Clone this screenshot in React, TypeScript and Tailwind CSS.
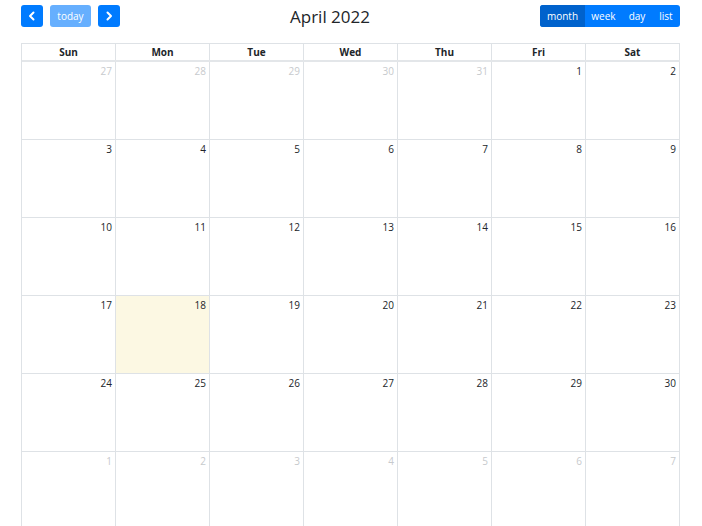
import React from 'react';

type Day = { n: number; muted?: boolean; today?: boolean };

const weekdays = ['Sun', 'Mon', 'Tue', 'Wed', 'Thu', 'Fri', 'Sat'];

// April 2022 laid out as six weeks, padding with March / May days
const buildWeeks = (): Day[][] => {
  const days: Day[] = [];
  for (let d = 27; d <= 31; d++) days.push({ n: d, muted: true });
  for (let d = 1; d <= 30; d++) days.push({ n: d, today: d === 18 });
  let next = 1;
  while (days.length < 42) days.push({ n: next++, muted: true });
  const weeks: Day[][] = [];
  for (let i = 0; i < 42; i += 7) weeks.push(days.slice(i, i + 7));
  return weeks;
};

const Chevron: React.FC<{ dir: 'left' | 'right' }> = ({ dir }) => (
  <svg width="10" height="10" viewBox="0 0 10 10" fill="none">
    <path
      d={dir === 'left' ? 'M6.5 1.5 3 5l3.5 3.5' : 'M3.5 1.5 7 5 3.5 8.5'}
      stroke="white"
      strokeWidth="2"
      strokeLinecap="round"
      strokeLinejoin="round"
    />
  </svg>
);

export default function App() {
  const weeks = buildWeeks();

  return (
    <div
      className="w-[702px] h-[526px] overflow-hidden bg-white pl-[21px] pr-[22px] pt-[5px]"
      style={{ fontFamily: '"Open Sans", "Noto Sans", sans-serif' }}
    >
      {/* toolbar */}
      <div className="flex items-center justify-between h-[22px]">
        <div className="flex items-center">
          <button className="w-[22px] h-[22px] rounded-[3px] bg-[#007bff] flex items-center justify-center">
            <Chevron dir="left" />
          </button>
          <button className="ml-[7px] w-[41px] h-[22px] rounded-[3px] bg-[#66affe] text-white text-[10px] leading-none">
            today
          </button>
          <button className="ml-[7px] w-[22px] h-[22px] rounded-[3px] bg-[#007bff] flex items-center justify-center">
            <Chevron dir="right" />
          </button>
        </div>
        <h2 className="text-[17px] leading-none text-[#212529]">April 2022</h2>
        <div className="flex h-[22px] w-[140px] rounded-[3px] overflow-hidden bg-[#007bff] text-white text-[10px]">
          <button className="w-[45px] bg-[#0062cc]">month</button>
          <button className="w-[37px]">week</button>
          <button className="w-[30px]">day</button>
          <button className="w-[28px]">list</button>
        </div>
      </div>

      {/* month grid */}
      <div className="mt-[16px] border-l border-t border-[#dee2e6] text-[#212529]">
        <div className="grid grid-cols-7 h-[18px] border-b-2 border-[#e3e6e9]">
          {weekdays.map((w) => (
            <div
              key={w}
              className="border-r border-[#dee2e6] flex items-center justify-center text-[10px] font-bold"
            >
              {w}
            </div>
          ))}
        </div>
        {weeks.map((week, i) => (
          <div key={i} className="grid grid-cols-7 h-[78px] border-b border-[#dee2e6]">
            {week.map((d, j) => (
              <div
                key={j}
                className={`border-r border-[#dee2e6] flex justify-end pt-[2px] pr-[3px] text-[10px] leading-[14px] ${
                  d.today ? 'bg-[#fcf8e3]' : ''
                } ${d.muted ? 'text-[#c7cacd]' : ''}`}
              >
                {d.n}
              </div>
            ))}
          </div>
        ))}
      </div>
    </div>
  );
}
